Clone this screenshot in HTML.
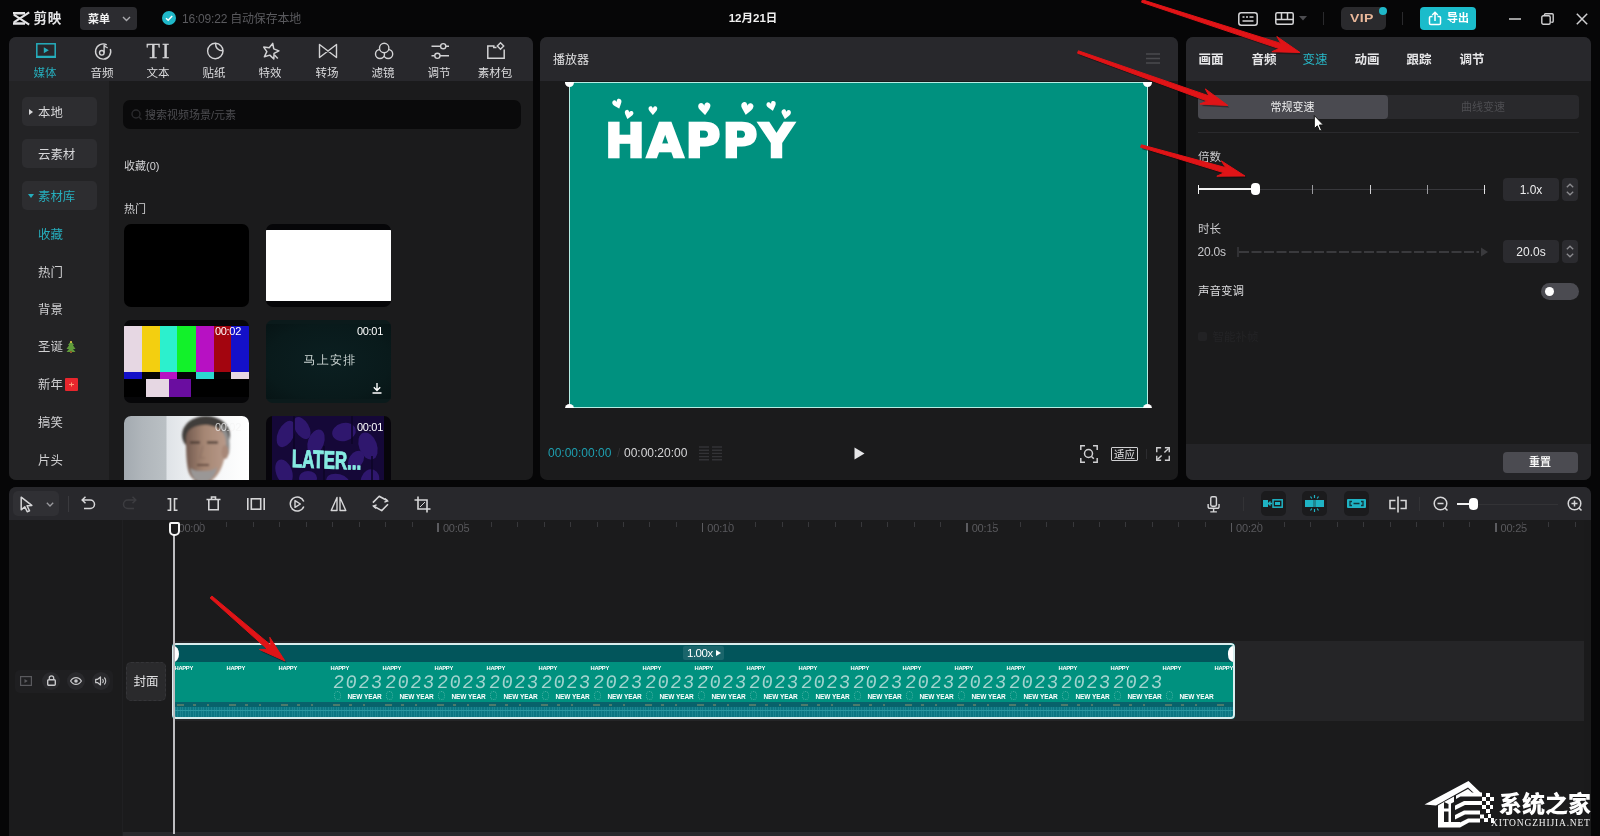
<!DOCTYPE html>
<html lang="zh-CN">
<head>
<meta charset="utf-8">
<title>剪映</title>
<style>
*{box-sizing:border-box;margin:0;padding:0}
html,body{width:1600px;height:836px;overflow:hidden;background:#060607;}
body{position:relative;font-family:"Liberation Sans","Noto Sans CJK SC",sans-serif;font-size:12px;color:#d8d8da;-webkit-font-smoothing:antialiased}
#root{position:absolute;left:0;top:0;width:1600px;height:836px;will-change:transform}
.abs{position:absolute}
svg{display:block;overflow:visible}
/* ---------- title bar ---------- */
#topbar{position:absolute;left:0;top:0;width:1600px;height:38px;background:#060607}
#logo{position:absolute;left:33.500px;top:8.500px;font-size:13.500px;font-weight:700;color:#e4e4e6;line-height:20px;letter-spacing:.800px}
#menu{position:absolute;left:80px;top:7px;width:57px;height:23px;border-radius:4px;background:#2c2c30;color:#f2f2f2;font-size:11px;font-weight:700;line-height:25px;padding-left:8px}
#saved{position:absolute;left:182px;top:10px;font-size:12px;color:#5a5a5e;line-height:18px;letter-spacing:-0.2px}
#title{position:absolute;left:653px;top:9px;width:200px;text-align:center;font-size:11.5px;font-weight:700;color:#f0f0f0;line-height:18px}
#vip{position:absolute;left:1341px;top:7px;width:45px;height:23px;border-radius:5px;background:#2a2a2d}
#export{position:absolute;left:1420px;top:7px;width:56px;height:23px;border-radius:4px;background:#1bbccb;color:#fff;font-size:11px;font-weight:700;line-height:23px;padding-left:27px}
.vsep{position:absolute;width:1px;background:#2a2a2d}
/* ---------- panels ---------- */
.panel{position:absolute;background:#1b1b1c;border-radius:7px;overflow:hidden}
.phead{position:absolute;left:0;top:0;right:0;background:#28282c}
/* left */
#left{left:9px;top:37px;width:524px;height:443px}
#left .phead{height:44px}
.tab{position:absolute;top:0;width:56px;height:44px;text-align:center;color:#dcdcde;font-size:11.5px;line-height:14px}
.ti{position:absolute;left:0;right:0;top:3px;font-family:"Liberation Serif",serif;font-size:22px;line-height:22px;color:#d2d2d4;letter-spacing:2px;padding-left:2px;-webkit-text-stroke:.350px #d2d2d4}
.tab span{position:absolute;left:-4px;right:-4px;top:29px}
.tab svg{position:absolute;left:17.500px;top:5px}
.tab.on{color:#26aebd}
#side{position:absolute;left:0;top:44px;width:100px;height:399px;background:#232325}
.sbtn{position:absolute;left:13px;width:75px;height:29px;border-radius:5px;background:#2d2d30;color:#d6d6d8;font-size:12.400px;line-height:32px;padding-left:16px}
.sitem{position:absolute;left:29px;font-size:12.400px;color:#d0d0d2;line-height:16px}
#search{position:absolute;left:114px;top:62.500px;width:398px;height:29px;border-radius:7px;background:#0a0a0b;color:#4c4c50;font-size:11px;line-height:30px;padding-left:22px}
.lbl{position:absolute;font-size:11px;color:#d2d2d4;line-height:14px}
.th{position:absolute;width:125px;height:83px;border-radius:7px;overflow:hidden;background:#060608}
.dur{position:absolute;right:8px;top:5px;font-size:11px;color:#fff;line-height:12px;letter-spacing:-0.3px}
/* player */
#player{left:540px;top:37px;width:638px;height:443px}
#player .phead{height:44px}
#ptitle{position:absolute;left:13px;top:15px;font-size:12px;color:#e2e2e4;line-height:16px}
#canvas{position:absolute;left:28.600px;top:45px;width:579.800px;height:326px;background:#00917f;border:1.600px solid #b4eee4}
.hd{position:absolute;width:9px;height:9px;border-radius:4.500px;background:#fff}
#happy{position:absolute;left:35px;top:35px;font-size:50px;font-weight:700;color:#fff;letter-spacing:2px;line-height:50px;font-family:"DejaVu Sans","Liberation Sans",sans-serif;transform-origin:0 0;transform:scale(.953,.920);-webkit-text-stroke:2.500px #fff}
.tc{position:absolute;top:408px;font-size:12px;line-height:16px;letter-spacing:0}
/* right */
#right{left:1185.500px;top:37px;width:405px;height:443px}
#right .phead{height:44px}
.rtab{position:absolute;top:14.500px;font-size:12.500px;font-weight:700;color:#e6e6e8;line-height:16px}
.rtab.on{color:#27b9c9;font-weight:400}
#seg{position:absolute;left:12px;top:58px;width:381px;height:24px;border-radius:4px;background:#29292c}
#seg .a{position:absolute;left:0;top:0;width:190px;height:24px;border-radius:4px;background:#4a4a50;color:#f0f0f0;text-align:center;font-size:11px;line-height:24px}
#seg .b{position:absolute;left:190px;top:0;width:191px;height:24px;color:#4e4e52;text-align:center;font-size:11px;line-height:24px}
.rl{position:absolute;left:12.500px;font-size:11.500px;color:#c9c9cc;line-height:14px}
.num{position:absolute;width:56px;height:23px;border-radius:4px;background:#2b2b2f;color:#ededee;font-size:12px;line-height:24.500px;text-align:center}
.spin{position:absolute;width:16px;height:23px;border-radius:4px;background:#2b2b2f}
#rfoot{position:absolute;left:0;top:407px;width:405px;height:36px;background:#242427}
#reset{position:absolute;left:317px;top:8px;width:75px;height:21px;border-radius:4px;background:#4b4b51;color:#f4f4f4;font-size:11px;font-weight:700;text-align:center;line-height:21px}
/* timeline */
#tl{left:9px;top:487px;width:1582px;height:360px}
#tl .phead{height:33px}
#ruler{position:absolute;left:0;top:33px;width:1582px;height:16px}
.rt{position:absolute;top:33px;font-size:11px;color:#5a5a5e;line-height:12px;letter-spacing:-0.200px}

.fh{position:absolute;top:21px;font-size:5.800px;line-height:8px;font-weight:700;color:#fff;letter-spacing:-0.300px}
.fy{position:absolute;top:30.500px;width:50px;font-size:19px;line-height:18px;color:#b4dcd8;letter-spacing:1.200px;font-family:"Liberation Mono",monospace;font-weight:400;transform:skewX(-6deg);opacity:.900}
.fn{position:absolute;top:49.500px;font-size:6.500px;line-height:8px;font-weight:700;color:#fff;letter-spacing:-0.100px;white-space:nowrap}
.fs{position:absolute;top:48px;width:7px;height:9px;border-radius:50%;border:1px dotted #9fd8cf;opacity:.450}
</style>
</head>
<body>
<div id="root">
<div id="topbar">
  <svg class="abs" style="left:13px;top:11px" width="17" height="15" viewBox="0 0 17 15"><path d="M0 2.300H12M0 12.600H12" fill="none" stroke="#e4e4e6" stroke-width="2.500"/><path d="M16.200 1.300L.800 11.300M16.200 13.600L.800 3.600" fill="none" stroke="#e4e4e6" stroke-width="2.100"/></svg>
  <div id="logo">剪映</div>
  <div id="menu">菜单<svg class="abs" style="left:42px;top:9px" width="9" height="6" viewBox="0 0 9 6"><path d="M1 1l3.5 3.5L8 1" fill="none" stroke="#a9a9ad" stroke-width="1.4"/></svg></div>
  <svg class="abs" style="left:162px;top:11px" width="14" height="14" viewBox="0 0 14 14"><circle cx="7" cy="7" r="7" fill="#1fb8c9"/><path d="M4 7.2l2.2 2.1L10.2 5" fill="none" stroke="#fff" stroke-width="1.5"/></svg>
  <div id="saved">16:09:22 自动保存本地</div>
  <div id="title">12月21日</div>
  <!-- keyboard -->
  <svg class="abs" style="left:1238px;top:12px" width="20" height="14" viewBox="0 0 20 14"><rect x=".8" y=".8" width="18.4" height="12.4" rx="2.5" fill="none" stroke="#d5d5d7" stroke-width="1.5"/><path d="M4.5 5h2M8 5h2M11.5 5h4M4.5 9h11" stroke="#d5d5d7" stroke-width="1.5"/></svg>
  <svg class="abs" style="left:1275px;top:12px" width="19" height="13" viewBox="0 0 19 13"><rect x=".8" y=".8" width="17.4" height="11.4" rx="1.5" fill="none" stroke="#d5d5d7" stroke-width="1.5"/><path d="M1 7.5h17M6.5 1v6.5M12.5 1v6.5" stroke="#d5d5d7" stroke-width="1.5"/></svg>
  <svg class="abs" style="left:1299px;top:16px" width="8" height="5" viewBox="0 0 8 5"><path d="M0 0h8L4 4.5z" fill="#4c4c50"/></svg>
  <div class="vsep" style="left:1323px;top:12px;height:13px"></div>
  <div id="vip"><div class="abs" style="left:9px;top:5px;font-size:11px;line-height:13px;font-weight:700;color:#eab89a;letter-spacing:.300px;transform-origin:0 50%;transform:scaleX(1.280)">VIP</div><div class="abs" style="left:38px;top:0;width:8px;height:8px;border-radius:4px;background:#1fb8c9"></div></div>
  <div class="vsep" style="left:1402px;top:12px;height:13px"></div>
  <div id="export"><svg class="abs" style="left:8px;top:4px" width="14" height="15" viewBox="0 0 14 15"><path d="M4.500 5.500H2.800a1.300 1.300 0 0 0-1.300 1.300v5.400a1.300 1.300 0 0 0 1.300 1.300h8.400a1.300 1.300 0 0 0 1.300-1.300V6.800a1.300 1.300 0 0 0-1.300-1.300H9.500M7 10V1.500M4.200 4L7 1.300 9.800 4" fill="none" stroke="#fff" stroke-width="1.500"/></svg>导出</div>
  <svg class="abs" style="left:1509px;top:18px" width="12" height="2" viewBox="0 0 12 2"><path d="M0 1h12" stroke="#cfcfd1" stroke-width="1.500"/></svg>
  <svg class="abs" style="left:1541px;top:13px" width="13" height="12" viewBox="0 0 13 12"><rect x=".8" y="2.800" width="8.400" height="8.400" rx="1.500" fill="none" stroke="#cfcfd1" stroke-width="1.400"/><path d="M3.500 2.500V1.800a1 1 0 0 1 1-1h6.700a1 1 0 0 1 1 1v6.400a1 1 0 0 1-1 1h-.9" fill="none" stroke="#cfcfd1" stroke-width="1.400"/></svg>
  <svg class="abs" style="left:1576px;top:13px" width="12" height="12" viewBox="0 0 12 12"><path d="M.800 .800l10.400 10.400M11.200 .800L.800 11.200" stroke="#cfcfd1" stroke-width="1.500"/></svg>
</div>

<!-- LEFT PANEL -->
<div class="panel" id="left">
  <div class="phead" id="ltabs">
    <div class="tab on" style="left:8px"><svg width="22" height="18" viewBox="0 0 22 18"><rect x="1.8" y="1.800" width="18.400" height="13.400" fill="none" stroke="#26aebd" stroke-width="1.500"/><path d="M1 14.800h20" stroke="#26aebd" stroke-width="2.200"/><path d="M8.800 5.300v6l5-3z" fill="#26aebd"/></svg><span>媒体</span></div>
    <div class="tab" style="left:65px"><svg width="22" height="18" viewBox="0 0 22 18"><path d="M14.800 2.900A7.600 7.600 0 1 0 18.300 7" fill="none" stroke="#d2d2d4" stroke-width="1.400"/><circle cx="9.800" cy="10.800" r="2.300" fill="none" stroke="#d2d2d4" stroke-width="1.400"/><path d="M12.100 10.800V2.600c.5 1.800 2 2.800 3.600 3.300" fill="none" stroke="#d2d2d4" stroke-width="1.400"/></svg><span>音频</span></div>
    <div class="tab" style="left:121px"><div class="ti">TI</div><span>文本</span></div>
    <div class="tab" style="left:177px"><svg width="22" height="18" viewBox="0 0 22 18"><path d="M11.500 1.300A7.700 7.700 0 1 0 19 8.800" fill="none" stroke="#d2d2d4" stroke-width="1.400"/><path d="M11.500 1.300c0 4.500 2.500 7.500 7.500 7.500C19 5 16 1.500 11.500 1.300z" fill="none" stroke="#d2d2d4" stroke-width="1.400" stroke-linejoin="round"/></svg><span>贴纸</span></div>
    <div class="tab" style="left:233px"><svg width="22" height="18" viewBox="0 0 22 18"><path d="M10.800 .800l2.200 4.800 5.200 .600-3.900 3.500 1.100 5.200-4.600-2.700-4.600 2.700 1.100-5.200-3.900-3.500 5.200-.600z" fill="none" stroke="#d2d2d4" stroke-width="1.400" stroke-linejoin="round" transform="rotate(14 10.800 8.500) translate(-.500 .300) scale(1.060)"/><path d="M14.500 13l3.300 3.600" stroke="#d2d2d4" stroke-width="1.500"/></svg><span>特效</span></div>
    <div class="tab" style="left:290px"><svg width="22" height="18" viewBox="0 0 22 18"><path d="M2.500 2.500v13l17-13v13z" fill="none" stroke="#d2d2d4" stroke-width="1.400" stroke-linejoin="round"/></svg><span>转场</span></div>
    <div class="tab" style="left:346px"><svg width="22" height="18" viewBox="0 0 22 18"><circle cx="15.200" cy="12" r="4.500" fill="#28282c" stroke="#d2d2d4" stroke-width="1.400"/><circle cx="7" cy="12" r="4.500" fill="#28282c" stroke="#d2d2d4" stroke-width="1.400"/><circle cx="11.200" cy="6" r="4.700" fill="#28282c" stroke="#d2d2d4" stroke-width="1.400"/></svg><span>滤镜</span></div>
    <div class="tab" style="left:402px"><svg width="22" height="18" viewBox="0 0 22 18"><path d="M2.500 4.200h9M17 4.200h3M2.500 13.800h3.200M11 13.800h9" stroke="#d2d2d4" stroke-width="1.400"/><circle cx="14.200" cy="4.200" r="2.600" fill="none" stroke="#d2d2d4" stroke-width="1.400"/><circle cx="8.400" cy="13.800" r="2.600" fill="none" stroke="#d2d2d4" stroke-width="1.400"/></svg><span>调节</span></div>
    <div class="tab" style="left:458px"><svg width="22" height="18" viewBox="0 0 22 18"><path d="M11.500 5.500H8.800V4H2.800v12.200h16.400V7.500" fill="none" stroke="#d2d2d4" stroke-width="1.500"/><path d="M15.500 .800l3.200 3.200-3.200 3.200-3.200-3.200z" fill="none" stroke="#d2d2d4" stroke-width="1.400"/></svg><span>素材包</span></div>
  </div>
  <div id="side">
    <div class="sbtn" style="top:16px"><svg class="abs" style="left:6.500px;top:12px" width="4" height="6" viewBox="0 0 4 6"><path d="M0 0l4 3L0 6z" fill="#d6d6d8"/></svg>本地</div>
    <div class="sbtn" style="top:58px">云素材</div>
    <div class="sbtn" style="top:100px;color:#26aebd"><svg class="abs" style="left:5.500px;top:13px" width="6" height="4" viewBox="0 0 6 4"><path d="M0 0h6L3 4z" fill="#26aebd"/></svg>素材库</div>
    <div class="sitem" style="top:145.8px;color:#26aebd">收藏</div>
    <div class="sitem" style="top:183.8px">热门</div>
    <div class="sitem" style="top:221.3px">背景</div>
    <div class="sitem" style="top:258.1px">圣诞<svg class="abs" style="left:28px;top:2px" width="10" height="12" viewBox="0 0 10 12"><path d="M5 0l3 4H6.800L9.500 8H7l2.500 3H.500L3 8H.500L3.200 4H2z" fill="#5f9a3a"/><rect x="4" y="10" width="2" height="2" fill="#8a5a2b"/><circle cx="5" cy="1" r="1" fill="#e8c84a"/></svg></div>
    <div class="sitem" style="top:295.6px">新年<div class="abs" style="left:27px;top:1px;width:13px;height:13px;background:#e8262d;border-radius:1px"><svg width="13" height="13" viewBox="0 0 13 13"><path d="M4 6.500h5M6.500 4.500v4" stroke="#ff9f7a" stroke-width="1"/></svg></div></div>
    <div class="sitem" style="top:333.8px">搞笑</div>
    <div class="sitem" style="top:371.6px">片头</div>
  </div>
  <div id="lcontent">
    <div id="search"><svg class="abs" style="left:8px;top:9px" width="11" height="11" viewBox="0 0 11 11"><circle cx="5" cy="5" r="4" fill="none" stroke="#2a2a2d" stroke-width="1.400"/><path d="M8 8l2.500 2.500" stroke="#2a2a2d" stroke-width="1.400"/></svg>搜索视频场景/元素</div>
    <div class="lbl" style="left:115px;top:122px">收藏(0)</div>
    <div class="lbl" style="left:115px;top:165px">热门</div>
    <div class="th" style="left:115px;top:187px;background:#000"></div>
    <div class="th" style="left:257px;top:187px"><div class="abs" style="left:0;top:6px;width:125px;height:71px;background:#fff"></div></div>
    <div class="th" id="bars" style="left:115px;top:283px">
      <div class="abs" style="left:0px;top:6px;width:18px;height:46px;background:#e6d7e3"></div>
      <div class="abs" style="left:18px;top:6px;width:18px;height:46px;background:#f3cf10"></div>
      <div class="abs" style="left:36px;top:6px;width:17px;height:46px;background:#2cf0cd"></div>
      <div class="abs" style="left:53px;top:6px;width:19px;height:46px;background:#12f12a"></div>
      <div class="abs" style="left:72px;top:6px;width:18px;height:46px;background:#b711c3"></div>
      <div class="abs" style="left:90px;top:6px;width:17px;height:46px;background:#a3050f"></div>
      <div class="abs" style="left:107px;top:6px;width:18px;height:46px;background:#1410c9"></div>
      <div class="abs" style="left:0px;top:52px;width:18px;height:6.500px;background:#1410c9"></div>
      <div class="abs" style="left:18px;top:52px;width:18px;height:6.500px;background:#050505"></div>
      <div class="abs" style="left:36px;top:52px;width:17px;height:6.500px;background:#b711c3"></div>
      <div class="abs" style="left:53px;top:52px;width:19px;height:6.500px;background:#050505"></div>
      <div class="abs" style="left:72px;top:52px;width:18px;height:6.500px;background:#2cd8d0"></div>
      <div class="abs" style="left:90px;top:52px;width:17px;height:6.500px;background:#050505"></div>
      <div class="abs" style="left:107px;top:52px;width:18px;height:6.500px;background:#e6d7e3"></div>
      <div class="abs" style="left:0;top:58.500px;width:125px;height:18.500px;background:#000"></div>
      <div class="abs" style="left:22px;top:58.500px;width:23px;height:18px;background:#e6d7e3"></div>
      <div class="abs" style="left:45px;top:58.500px;width:22px;height:18px;background:#6a0da0"></div>
      <div class="dur">00:02</div>
    </div>
    <div class="th" style="left:257px;top:283px;background:#0b1a1b">
      <div class="abs" style="left:0;top:4px;width:125px;height:75px;background:radial-gradient(ellipse at 50% 50%,#0b1f21 0%,#091a1b 70%,#071415 100%)"></div>
      <div class="abs" style="left:0;top:32.500px;width:125px;text-align:center;font-size:12px;line-height:14px;color:#cfd8d6;letter-spacing:1.300px;padding-left:3px;font-family:'WenQuanYi Zen Hei','Noto Sans CJK SC',sans-serif">马上安排</div>
      <svg class="abs" style="left:106px;top:63px" width="10" height="11" viewBox="0 0 10 11"><path d="M5 0v7M1.800 4.200L5 7.400l3.200-3.200M.500 10h9" fill="none" stroke="#fff" stroke-width="1.400"/></svg>
      <div class="dur">00:01</div>
    </div>
    <div class="th" id="man" style="left:115px;top:378.500px">
      <svg class="abs" style="left:0;top:0" width="125" height="83" viewBox="0 0 125 83">
        <defs>
          <linearGradient id="mbg" x1="0" x2="1" y1="0" y2="0"><stop offset="0" stop-color="#a3aab0"/><stop offset=".150" stop-color="#b0b6bb"/><stop offset=".335" stop-color="#bac0c4"/><stop offset=".345" stop-color="#dfe3e7"/><stop offset=".600" stop-color="#f1f3f5"/><stop offset="1" stop-color="#ffffff"/></linearGradient>
          <linearGradient id="mface" x1="0" x2="1" y1="0" y2="0"><stop offset="0" stop-color="#735a4f"/><stop offset=".450" stop-color="#a58673"/><stop offset="1" stop-color="#b89a8a"/></linearGradient>
          <filter id="mbl" x="-10%" y="-10%" width="120%" height="120%"><feGaussianBlur stdDeviation="1.200"/></filter>
        </defs>
        <rect width="125" height="83" fill="url(#mbg)"/>
        <g filter="url(#mbl)">
          <path d="M56 70c8-4 16-6 24-6 10 0 22 4 30 10v10H50z" fill="#2e2e30"/>
          <ellipse cx="82" cy="19" rx="24" ry="19" fill="#403d3b"/>
          <path d="M98 8c6 6 9 16 7 30l-6 4z" fill="#8e8e8e"/>
          <path d="M62 22c0-8 8-13 19-13s21 6 21 18c0 10-2 22-8 31-4 6-10 9-15 9s-11-3-14-10c-3-8-3-24-3-35z" fill="url(#mface)"/>
          <path d="M66 52c4 3 8 3 14 3s10-1 13-4c-1 8-6 15-14 15s-12-6-13-14z" fill="#9a9796"/>
          <ellipse cx="101" cy="36" rx="3.500" ry="7" fill="#a88878"/>
          <path d="M66 26.500h10M83 26.500h11" stroke="#3f302a" stroke-width="2.200"/>
          <path d="M73 49h12" stroke="#5e433c" stroke-width="1.800"/>
          <path d="M79 30l-3 12h5" stroke="#8f7265" stroke-width="1.200" fill="none"/>
        </g>
      </svg>
      <div class="dur" style="color:#f4f4f4;opacity:.800">00:02</div>
    </div>
    <div class="th" id="later" style="left:257px;top:378.500px;background:#07050b">
      <div class="abs" style="left:6px;top:0;width:112px;height:83px;background:#150838;overflow:hidden">
      <svg class="abs" style="left:0;top:0" width="112" height="83" viewBox="0 0 112 83"><g fill="#2f176e"><ellipse cx="14" cy="18" rx="8" ry="14" transform="rotate(25 14 18)"/><ellipse cx="30" cy="12" rx="7" ry="12" transform="rotate(-30 30 12)"/><ellipse cx="44" cy="26" rx="8" ry="13" transform="rotate(20 44 26)"/><ellipse cx="72" cy="16" rx="12" ry="9" transform="rotate(-15 72 16)"/><ellipse cx="96" cy="30" rx="9" ry="14" transform="rotate(-20 96 30)"/><ellipse cx="12" cy="56" rx="8" ry="13" transform="rotate(-20 12 56)"/><ellipse cx="36" cy="62" rx="9" ry="7"/><ellipse cx="66" cy="66" rx="12" ry="8" transform="rotate(15 66 66)"/><ellipse cx="98" cy="64" rx="9" ry="11" transform="rotate(20 98 64)"/><ellipse cx="84" cy="44" rx="7" ry="10" transform="rotate(35 84 44)"/></g><g stroke="#0d0526" stroke-width="1.500"><path d="M22 0v40M52 30v53M80 0v28M100 40v43"/></g></svg>
      </div>
      <div class="abs" style="left:26px;top:30px;font-size:25px;line-height:25px;font-weight:700;color:#86ebe2;-webkit-text-stroke:.900px #86ebe2;white-space:nowrap;transform-origin:0 0;transform:scale(.680,1) rotate(1.500deg)">LATER...</div>
      <div class="dur">00:01</div>
    </div>
  </div>
</div>

<!-- PLAYER -->
<div class="panel" id="player">
  <div class="phead"></div>
  <div id="ptitle">播放器</div>
  <svg class="abs" style="left:606px;top:16px" width="14" height="11" viewBox="0 0 14 11"><path d="M0 1h14M0 5.500h14M0 10h14" stroke="#4a4a4e" stroke-width="1.600"/></svg>
  <div id="canvas">
    <div class="abs" style="left:42.5px;top:15.5px;width:11px;height:11px;line-height:11px;font-size:13px;color:#fff;text-align:center;font-family:'DejaVu Sans',sans-serif;transform:rotate(-20deg)">♥</div><div class="abs" style="left:53.0px;top:27.0px;width:10px;height:10px;line-height:10px;font-size:12px;color:#fff;text-align:center;font-family:'DejaVu Sans',sans-serif;transform:rotate(15deg)">♥</div><div class="abs" style="left:78.0px;top:23.0px;width:10px;height:10px;line-height:10px;font-size:12px;color:#fff;text-align:center;font-family:'DejaVu Sans',sans-serif;transform:rotate(0deg)">♥</div><div class="abs" style="left:127.5px;top:18.5px;width:15px;height:15px;line-height:15px;font-size:17px;color:#fff;text-align:center;font-family:'DejaVu Sans',sans-serif;transform:rotate(-5deg)">♥</div><div class="abs" style="left:169.5px;top:18.5px;width:15px;height:15px;line-height:15px;font-size:17px;color:#fff;text-align:center;font-family:'DejaVu Sans',sans-serif;transform:rotate(10deg)">♥</div><div class="abs" style="left:196.5px;top:17.5px;width:11px;height:11px;line-height:11px;font-size:13px;color:#fff;text-align:center;font-family:'DejaVu Sans',sans-serif;transform:rotate(-15deg)">♥</div><div class="abs" style="left:210.0px;top:25.5px;width:11px;height:11px;line-height:11px;font-size:13px;color:#fff;text-align:center;font-family:'DejaVu Sans',sans-serif;transform:rotate(10deg)">♥</div>
    <div id="happy">HAPPY</div>
  </div>
  <div class="abs" style="left:20px;top:45px;width:600px;height:326px;overflow:hidden"><div class="hd" style="left:4.900px;top:-4.500px"></div><div class="hd" style="left:583.100px;top:-4.500px"></div><div class="hd" style="left:4.900px;top:321.500px"></div><div class="hd" style="left:583.100px;top:321.500px"></div></div>
  <div class="tc" style="left:8px;color:#1e9fb0">00:00:00:00</div>
  <div class="tc" style="left:77px;color:#333336">/</div>
  <div class="tc" style="left:84px;color:#d6d6d8">00:00:20:00</div>
  <svg class="abs" style="left:159px;top:409px" width="23" height="15" viewBox="0 0 23 15"><g stroke="#333336" stroke-width="1.400"><path d="M0 1h10M13 1h10M0 4.200h10M13 4.200h10M0 7.400h10M13 7.400h10M0 10.600h10M13 10.600h10M0 13.800h10M13 13.800h10"/></g></svg>
  <svg class="abs" style="left:314px;top:410px" width="11" height="13" viewBox="0 0 11 13"><path d="M.500 .500v12l10-6z" fill="#e6e6e8"/></svg>
  <svg class="abs" style="left:540px;top:408px" width="18" height="18" viewBox="0 0 18 18"><path d="M.800 5V.800H5M13 .800h4.200V5M17.200 13v4.200H13M5 17.200H.800V13" fill="none" stroke="#d0d0d2" stroke-width="1.500"/><circle cx="8.500" cy="8.500" r="4" fill="none" stroke="#d0d0d2" stroke-width="1.500"/><path d="M11.500 11.500l2.300 2.300" stroke="#d0d0d2" stroke-width="1.500"/></svg>
  <div class="abs" style="left:571px;top:410px;width:27px;height:14px;border:1px solid #d0d0d2;border-radius:1px;font-size:10.500px;line-height:12px;text-align:center;color:#e0e0e2;letter-spacing:0">适应</div>
  <div class="vsep" style="left:606px;top:412px;height:10px;background:#2c2c2f"></div>
  <svg class="abs" style="left:615.500px;top:410px" width="14" height="14" viewBox="0 0 15 15"><path d="M.800 5.500V.800H5.500M9.500 .800h4.700V5.500M14.200 9.500v4.700H9.500M5.500 14.200H.800V9.500" fill="none" stroke="#d0d0d2" stroke-width="1.500"/><path d="M13.500 1.500L9 6M1.500 13.500L6 9" stroke="#d0d0d2" stroke-width="1.500"/></svg>
</div>

<!-- RIGHT -->
<div class="panel" id="right">
  <div class="phead"></div>
  <div class="rtab" style="left:13px">画面</div>
  <div class="rtab" style="left:66px">音频</div>
  <div class="rtab on" style="left:117px">变速</div>
  <div class="rtab" style="left:169px">动画</div>
  <div class="rtab" style="left:221px">跟踪</div>
  <div class="rtab" style="left:274px">调节</div>
  <div id="seg"><div class="a">常规变速</div><div class="b">曲线变速</div></div>
  <div class="abs" style="left:12px;top:95px;width:381px;height:1px;background:#2a2a2d"></div>
  <div class="rl" style="top:113px">倍数</div>
  <!-- slider -->
  <div class="abs" style="left:12px;top:152px;width:288px;height:1px;background:#38383c"></div>
  <div class="abs" style="left:12px;top:151px;width:58px;height:2px;background:#f2f2f2"></div>
  <div class="abs" style="left:12px;top:148px;width:1px;height:9px;background:#f2f2f2"></div>
  <div class="abs" style="left:126px;top:148px;width:1px;height:9px;background:#9a9a9e"></div>
  <div class="abs" style="left:184px;top:148px;width:1px;height:9px;background:#d0d0d2"></div>
  <div class="abs" style="left:241px;top:148px;width:1px;height:9px;background:#9a9a9e"></div>
  <div class="abs" style="left:298px;top:148px;width:1px;height:9px;background:#e0e0e2"></div>
  <div class="abs" style="left:65px;top:146px;width:9px;height:12px;border-radius:4px;background:#fff"></div>
  <div class="num" style="left:317.500px;top:141px">1.0x</div>
  <div class="spin" style="left:376px;top:141px"><svg class="abs" style="left:4px;top:5px" width="8" height="13" viewBox="0 0 8 13"><path d="M.800 4.300L4 1.200l3.200 3.100M.800 8.700L4 11.800l3.200-3.100" fill="none" stroke="#8a8a8e" stroke-width="1.300"/></svg></div>
  <div class="rl" style="top:185px">时长</div>
  <div class="abs" style="left:12px;top:207px;font-size:12px;line-height:16px;color:#c9c9cc;letter-spacing:-0.200px">20.0s</div>
  <svg class="abs" style="left:51px;top:209px" width="252" height="12" viewBox="0 0 252 12"><path d="M1 1v10" stroke="#3a3a3d" stroke-width="1.500"/><path d="M2 6h240" stroke="#3a3a3d" stroke-width="2" stroke-dasharray="10 2.500"/><path d="M244 1.500l7 4.500-7 4.500z" fill="#3a3a3d"/></svg>
  <div class="num" style="left:317.500px;top:203px">20.0s</div>
  <div class="spin" style="left:376px;top:203px"><svg class="abs" style="left:4px;top:5px" width="8" height="13" viewBox="0 0 8 13"><path d="M.800 4.300L4 1.200l3.200 3.100M.800 8.700L4 11.800l3.200-3.100" fill="none" stroke="#8a8a8e" stroke-width="1.300"/></svg></div>
  <div class="rl" style="top:247px;color:#dcdcde">声音变调</div>
  <div class="abs" style="left:355px;top:246px;width:38px;height:17px;border-radius:9px;background:#4b4b51"><div class="abs" style="left:4px;top:4px;width:9px;height:9px;border-radius:5px;background:#fff"></div></div>
  <div class="abs" style="left:12px;top:295px;width:9px;height:9px;border-radius:2px;background:#222224"></div>
  <div class="rl" style="left:27px;top:293px;color:#242426">智能补帧</div>
  <div id="rfoot"><div id="reset">重置</div></div>
</div>

<!-- TIMELINE -->
<div class="panel" id="tl">
  <div class="phead"></div>
  <div class="abs" style="left:4px;top:4px;width:46px;height:25px;border-radius:5px;background:#303034"></div>
  <svg class="abs" style="left:11px;top:9px" width="14" height="17" viewBox="0 0 14 17"><path d="M1.200 1.200v12.600l3.600-3 2.400 5 2.300-1-2.400-5 4.700-.400z" fill="none" stroke="#d6d6d8" stroke-width="1.500" stroke-linejoin="round"/></svg>
  <svg class="abs" style="left:37px;top:15px" width="8" height="5" viewBox="0 0 8 5"><path d="M.800 .800L4 4l3.200-3.200" fill="none" stroke="#9a9a9e" stroke-width="1.300"/></svg>
  <div class="vsep" style="left:59px;top:9px;height:16px;background:#3a3a3e"></div>
  <svg class="abs" style="left:72px;top:9px" width="15" height="15" viewBox="0 0 15 15"><path d="M4.500 .800L1.200 4l3.300 3.200M1.500 4h7.700a4.300 4.300 0 0 1 0 8.600H3" fill="none" stroke="#d6d6d8" stroke-width="1.500"/></svg>
  <svg class="abs" style="left:113px;top:9px" width="15" height="15" viewBox="0 0 15 15"><path d="M10.500 .800L13.800 4l-3.300 3.200M13.500 4H5.800a4.300 4.300 0 0 0 0 8.600H12" fill="none" stroke="#3c3c40" stroke-width="1.500"/></svg>
  <svg class="abs" style="left:157.5px;top:10.5px" width="11" height="13" viewBox="0 0 11 13"><path d="M.500 .800h3v11.400h-3M10.500 .800h-3v11.400h3" fill="none" stroke="#d6d6d8" stroke-width="1.600"/></svg>
  <svg class="abs" style="left:197px;top:9px" width="15" height="15" viewBox="0 0 15 15"><path d="M.500 3.500h14M5.500 3.200V1h4v2.200M2.800 3.800v10h9.400v-10" fill="none" stroke="#d6d6d8" stroke-width="1.600"/></svg>
  <svg class="abs" style="left:237.500px;top:11px" width="18" height="12" viewBox="0 0 18 12"><path d="M.800 0v12M17.200 0v12" stroke="#d6d6d8" stroke-width="1.600"/><rect x="4.300" y=".800" width="9.400" height="10.400" fill="none" stroke="#d6d6d8" stroke-width="1.600"/></svg>
  <svg class="abs" style="left:280px;top:9px" width="16" height="16" viewBox="0 0 16 16"><path d="M14.800 5.500A7 7 0 1 0 14.800 10.500" fill="none" stroke="#d6d6d8" stroke-width="1.500"/><path d="M6 4.600v6.800l5.400-3.400z" fill="none" stroke="#d6d6d8" stroke-width="1.400" stroke-linejoin="round"/></svg>
  <svg class="abs" style="left:321px;top:9px" width="17" height="16" viewBox="0 0 17 16"><path d="M7 1.500v13H1.200z" fill="none" stroke="#d6d6d8" stroke-width="1.400" stroke-linejoin="round"/><path d="M10 1.500v13h5.800z" fill="none" stroke="#d6d6d8" stroke-width="1.400" stroke-linejoin="round"/></svg>
  <svg class="abs" style="left:363px;top:8px" width="17" height="17" viewBox="0 0 17 17"><path d="M.900 7.600L7.200 1.200l8.300 4.600M16 9.200l-6.300 6.400-8.300-4.600" fill="none" stroke="#d6d6d8" stroke-width="1.600" stroke-linejoin="round"/><path d="M13 3.500l2.700 2.400-3.300 1.200M4 13.500l-2.700-2.400 3.300-1.200" fill="none" stroke="#d6d6d8" stroke-width="1.300"/></svg>
  <svg class="abs" style="left:405px;top:9px" width="17" height="17" viewBox="0 0 17 17"><path d="M4 .500v12.500h12.500M.500 4h12.500v12.500" fill="none" stroke="#d6d6d8" stroke-width="1.600"/><path d="M6 11l5-5" stroke="#d6d6d8" stroke-width="1"/></svg>
  <svg class="abs" style="left:1198px;top:8.500px" width="13.200" height="17" viewBox="0 0 14 18"><rect x="4" y=".800" width="6" height="10" rx="1.500" fill="none" stroke="#d6d6d8" stroke-width="1.500"/><path d="M1.200 8.500v2.500a2 2 0 0 0 2 2h7.600a2 2 0 0 0 2-2V8.500M7 13v3.500M3.500 16.800h7" fill="none" stroke="#d6d6d8" stroke-width="1.500"/></svg>
  <div class="vsep" style="left:1234px;top:10px;height:14px;background:#333336"></div>
  <div class="abs" style="left:1251.5px;top:4px;width:25px;height:25px;border-radius:5px;background:#1b1b1d"></div>
  <div class="abs" style="left:1293px;top:4px;width:25px;height:25px;border-radius:5px;background:#1b1b1d"></div>
  <div class="abs" style="left:1335px;top:4px;width:25px;height:25px;border-radius:5px;background:#1b1b1d"></div>
  <svg class="abs" style="left:1254px;top:12px" width="20" height="9" viewBox="0 0 20 9"><rect x="0" y="1" width="5" height="7" fill="#1fb3c4"/><path d="M5 4.500h4M7.500 2.500l-2 2 2 2" stroke="#1fb3c4" stroke-width="1.300" fill="none"/><rect x="10" y=".800" width="9.200" height="7.400" fill="none" stroke="#1fb3c4" stroke-width="1.500"/><rect x="12" y="3" width="5" height="3" fill="#1fb3c4"/></svg>
  <svg class="abs" style="left:1296px;top:7px" width="19" height="19" viewBox="0 0 19 19"><rect x="0" y="6" width="8" height="7" fill="#1fb3c4"/><rect x="11" y="6" width="8" height="7" fill="#1fb3c4"/><rect x="8" y="6" width="3" height="7" fill="#1fb3c4" opacity=".700"/><path d="M9.500 1v3M5.500 2.500l1.300 2M13.500 2.500l-1.300 2M9.500 15v3M5.500 16.500l1.300-2M13.500 16.500l-1.300-2" stroke="#1fb3c4" stroke-width="1.200"/></svg>
  <svg class="abs" style="left:1338px;top:12px" width="19" height="9" viewBox="0 0 19 9"><rect x="0" y="0" width="19" height="9" rx="1" fill="#1fb3c4"/><path d="M5 2.500H3v4h2M14 2.500h2v4h-2M6.500 4.500h6" stroke="#12343a" stroke-width="1.300" fill="none"/></svg>
  <svg class="abs" style="left:1380px;top:9px" width="18" height="17" viewBox="0 0 18 17"><path d="M9 .500v16M6.500 4.500H1v8h5.500M11.500 4.500H17v8h-5.500" fill="none" stroke="#d6d6d8" stroke-width="1.600"/></svg>
  <div class="vsep" style="left:1410px;top:10px;height:14px;background:#333336"></div>
  <svg class="abs" style="left:1424px;top:9px" width="16" height="16" viewBox="0 0 16 16"><circle cx="7.500" cy="7.500" r="6.300" fill="none" stroke="#d6d6d8" stroke-width="1.500"/><path d="M4.500 7.500h6M12 12l2.500 2.500" stroke="#d6d6d8" stroke-width="1.500"/></svg>
  <div class="abs" style="left:1448px;top:17px;width:101px;height:1px;background:#333336"></div>
  <div class="abs" style="left:1448px;top:16px;width:14px;height:2px;background:#f0f0f0"></div>
  <div class="abs" style="left:1460px;top:11px;width:9px;height:12px;border-radius:4px;background:#fff"></div>
  <svg class="abs" style="left:1558px;top:9px" width="16" height="16" viewBox="0 0 16 16"><circle cx="7.500" cy="7.500" r="6.300" fill="none" stroke="#d6d6d8" stroke-width="1.500"/><path d="M4.500 7.500h6M7.500 4.500v6M12 12l2.500 2.500" stroke="#d6d6d8" stroke-width="1.500"/></svg>
  <div class="abs" style="left:113px;top:33px;width:1px;height:320px;background:#202022"></div>
  <div class="rt" style="left:169.5px;top:34.5px">00:00</div>
  <div class="abs" style="left:190.9px;top:35px;width:1px;height:5px;background:#38383b"></div>
  <div class="abs" style="left:217.4px;top:35px;width:1px;height:5px;background:#38383b"></div>
  <div class="abs" style="left:243.8px;top:35px;width:1px;height:5px;background:#38383b"></div>
  <div class="abs" style="left:270.3px;top:35px;width:1px;height:5px;background:#38383b"></div>
  <div class="abs" style="left:296.7px;top:35px;width:1px;height:5px;background:#38383b"></div>
  <div class="abs" style="left:323.1px;top:35px;width:1px;height:5px;background:#38383b"></div>
  <div class="abs" style="left:349.6px;top:35px;width:1px;height:5px;background:#38383b"></div>
  <div class="abs" style="left:376.0px;top:35px;width:1px;height:5px;background:#38383b"></div>
  <div class="abs" style="left:402.5px;top:35px;width:1px;height:5px;background:#38383b"></div>
  <div class="abs" style="left:428.4px;top:36px;width:1.500px;height:9px;background:#5c5c60"></div>
  <div class="rt" style="left:433.9px;top:34.5px">00:05</div>
  <div class="abs" style="left:455.3px;top:35px;width:1px;height:5px;background:#38383b"></div>
  <div class="abs" style="left:481.8px;top:35px;width:1px;height:5px;background:#38383b"></div>
  <div class="abs" style="left:508.2px;top:35px;width:1px;height:5px;background:#38383b"></div>
  <div class="abs" style="left:534.7px;top:35px;width:1px;height:5px;background:#38383b"></div>
  <div class="abs" style="left:561.1px;top:35px;width:1px;height:5px;background:#38383b"></div>
  <div class="abs" style="left:587.5px;top:35px;width:1px;height:5px;background:#38383b"></div>
  <div class="abs" style="left:614.0px;top:35px;width:1px;height:5px;background:#38383b"></div>
  <div class="abs" style="left:640.4px;top:35px;width:1px;height:5px;background:#38383b"></div>
  <div class="abs" style="left:666.9px;top:35px;width:1px;height:5px;background:#38383b"></div>
  <div class="abs" style="left:692.8px;top:36px;width:1.500px;height:9px;background:#5c5c60"></div>
  <div class="rt" style="left:698.3px;top:34.5px">00:10</div>
  <div class="abs" style="left:719.7px;top:35px;width:1px;height:5px;background:#38383b"></div>
  <div class="abs" style="left:746.2px;top:35px;width:1px;height:5px;background:#38383b"></div>
  <div class="abs" style="left:772.6px;top:35px;width:1px;height:5px;background:#38383b"></div>
  <div class="abs" style="left:799.1px;top:35px;width:1px;height:5px;background:#38383b"></div>
  <div class="abs" style="left:825.5px;top:35px;width:1px;height:5px;background:#38383b"></div>
  <div class="abs" style="left:851.9px;top:35px;width:1px;height:5px;background:#38383b"></div>
  <div class="abs" style="left:878.4px;top:35px;width:1px;height:5px;background:#38383b"></div>
  <div class="abs" style="left:904.8px;top:35px;width:1px;height:5px;background:#38383b"></div>
  <div class="abs" style="left:931.3px;top:35px;width:1px;height:5px;background:#38383b"></div>
  <div class="abs" style="left:957.2px;top:36px;width:1.500px;height:9px;background:#5c5c60"></div>
  <div class="rt" style="left:962.7px;top:34.5px">00:15</div>
  <div class="abs" style="left:984.1px;top:35px;width:1px;height:5px;background:#38383b"></div>
  <div class="abs" style="left:1010.6px;top:35px;width:1px;height:5px;background:#38383b"></div>
  <div class="abs" style="left:1037.0px;top:35px;width:1px;height:5px;background:#38383b"></div>
  <div class="abs" style="left:1063.5px;top:35px;width:1px;height:5px;background:#38383b"></div>
  <div class="abs" style="left:1089.9px;top:35px;width:1px;height:5px;background:#38383b"></div>
  <div class="abs" style="left:1116.3px;top:35px;width:1px;height:5px;background:#38383b"></div>
  <div class="abs" style="left:1142.8px;top:35px;width:1px;height:5px;background:#38383b"></div>
  <div class="abs" style="left:1169.2px;top:35px;width:1px;height:5px;background:#38383b"></div>
  <div class="abs" style="left:1195.7px;top:35px;width:1px;height:5px;background:#38383b"></div>
  <div class="abs" style="left:1221.6px;top:36px;width:1.500px;height:9px;background:#5c5c60"></div>
  <div class="rt" style="left:1227.1px;top:34.5px">00:20</div>
  <div class="abs" style="left:1248.5px;top:35px;width:1px;height:5px;background:#38383b"></div>
  <div class="abs" style="left:1275.0px;top:35px;width:1px;height:5px;background:#38383b"></div>
  <div class="abs" style="left:1301.4px;top:35px;width:1px;height:5px;background:#38383b"></div>
  <div class="abs" style="left:1327.9px;top:35px;width:1px;height:5px;background:#38383b"></div>
  <div class="abs" style="left:1354.3px;top:35px;width:1px;height:5px;background:#38383b"></div>
  <div class="abs" style="left:1380.7px;top:35px;width:1px;height:5px;background:#38383b"></div>
  <div class="abs" style="left:1407.2px;top:35px;width:1px;height:5px;background:#38383b"></div>
  <div class="abs" style="left:1433.6px;top:35px;width:1px;height:5px;background:#38383b"></div>
  <div class="abs" style="left:1460.1px;top:35px;width:1px;height:5px;background:#38383b"></div>
  <div class="abs" style="left:1486.0px;top:36px;width:1.500px;height:9px;background:#5c5c60"></div>
  <div class="rt" style="left:1491.5px;top:34.5px">00:25</div>
  <div class="abs" style="left:1512.9px;top:35px;width:1px;height:5px;background:#38383b"></div>
  <div class="abs" style="left:1539.4px;top:35px;width:1px;height:5px;background:#38383b"></div>
  <div class="abs" style="left:1565.8px;top:35px;width:1px;height:5px;background:#38383b"></div>
  <div class="abs" style="left:164px;top:154px;width:1411px;height:79.500px;background:#252527"></div>
  <div class="abs" style="left:1575px;top:33px;width:8px;height:320px;background:#1a1a1b"></div>
  <div class="abs" style="left:114px;top:344.5px;width:1377px;height:8px;background:#29292c"></div>
  <div class="abs" style="left:5.5px;top:182.5px;width:98px;height:23px;border-radius:5px;background:#1f1f21"></div>
  <svg class="abs" style="left:11px;top:189px" width="12" height="10" viewBox="0 0 12 10"><rect x=".600" y=".600" width="10.800" height="8.800" fill="none" stroke="#5a5a5e" stroke-width="1.200"/><path d="M4.500 3v4l3.200-2z" fill="#5a5a5e"/></svg>
  <div class="abs" style="left:33px;top:185px;width:18px;height:18px;border-radius:9px;background:#29292c"></div>
  <div class="abs" style="left:58px;top:185px;width:18px;height:18px;border-radius:9px;background:#29292c"></div>
  <div class="abs" style="left:83px;top:185px;width:18px;height:18px;border-radius:9px;background:#29292c"></div>
  <svg class="abs" style="left:37.5px;top:188px" width="9" height="11" viewBox="0 0 9 11"><rect x=".700" y="4.700" width="7.600" height="5.600" rx="1" fill="none" stroke="#c8c8ca" stroke-width="1.400"/><path d="M2.300 4.500V3a2.200 2.200 0 0 1 4.400 0v1.500" fill="none" stroke="#c8c8ca" stroke-width="1.300"/></svg>
  <svg class="abs" style="left:61px;top:190px" width="12" height="8" viewBox="0 0 12 8"><path d="M.600 4C2 1.500 4 .600 6 .600S10 1.500 11.400 4C10 6.500 8 7.400 6 7.400S2 6.500 .600 4z" fill="none" stroke="#c8c8ca" stroke-width="1.200"/><circle cx="6" cy="4" r="1.800" fill="#c8c8ca"/></svg>
  <svg class="abs" style="left:86px;top:189px" width="12" height="10" viewBox="0 0 12 10"><path d="M.700 3.300h2L5.500 1v8L2.700 6.700h-2z" fill="none" stroke="#c8c8ca" stroke-width="1.200" stroke-linejoin="round"/><path d="M7.500 3a3 3 0 0 1 0 4M9.300 1.500a5 5 0 0 1 0 7" fill="none" stroke="#c8c8ca" stroke-width="1.100"/></svg>
  <div class="abs" style="left:117px;top:174.5px;width:40px;height:39px;border-radius:5px;background:#2a2a2c;border:1px dashed #353538;color:#e0e0e2;font-size:12.500px;line-height:38px;text-align:center">封面</div>
  <div id="clip" class="abs" style="left:162.5px;top:156px;width:1063px;height:76px;border-radius:4px;background:#00917f;overflow:hidden">
<div class="abs" style="left:0;top:0;width:100%;height:18.500px;background:#02555b"></div>
<div class="abs" style="left:0;top:59px;width:100%;height:17px;background:#0c7682"></div>
<div class="abs" style="left:0;top:59px;width:100%;height:4.500px;background:#08626b"></div>
<div class="abs" style="left:0;top:63.500px;width:100%;height:12px;background:repeating-linear-gradient(90deg,rgba(60,160,170,.350) 0,rgba(60,160,170,.350) 1px,transparent 1px,transparent 2.600px)"></div><div class="abs" style="left:0;top:60.500px;width:100%;height:2px;opacity:.350;background:repeating-linear-gradient(90deg,transparent 0,transparent 5px,#c9a86a 5px,#c9a86a 12px,transparent 12px,transparent 21px,#c9a86a 21px,#c9a86a 24px,transparent 24px,transparent 35px,#c9a86a 35px,#c9a86a 37px,transparent 37px,transparent 52px)"></div><div class="abs" style="left:0;top:67px;width:100%;height:1px;background:#2a97a0"></div>
<div class="fh" style="left:3px">HAPPY</div>
<div class="fh" style="left:55px">HAPPY</div>
<div class="fh" style="left:107px">HAPPY</div>
<div class="fh" style="left:159px">HAPPY</div>
<div class="fy" style="left:161px">2023</div>
<div class="fn" style="left:176px">NEW YEAR</div>
<div class="fs" style="left:162px"></div>
<div class="fh" style="left:211px">HAPPY</div>
<div class="fy" style="left:213px">2023</div>
<div class="fn" style="left:228px">NEW YEAR</div>
<div class="fs" style="left:214px"></div>
<div class="fh" style="left:263px">HAPPY</div>
<div class="fy" style="left:265px">2023</div>
<div class="fn" style="left:280px">NEW YEAR</div>
<div class="fs" style="left:266px"></div>
<div class="fh" style="left:315px">HAPPY</div>
<div class="fy" style="left:317px">2023</div>
<div class="fn" style="left:332px">NEW YEAR</div>
<div class="fs" style="left:318px"></div>
<div class="fh" style="left:367px">HAPPY</div>
<div class="fy" style="left:369px">2023</div>
<div class="fn" style="left:384px">NEW YEAR</div>
<div class="fs" style="left:370px"></div>
<div class="fh" style="left:419px">HAPPY</div>
<div class="fy" style="left:421px">2023</div>
<div class="fn" style="left:436px">NEW YEAR</div>
<div class="fs" style="left:422px"></div>
<div class="fh" style="left:471px">HAPPY</div>
<div class="fy" style="left:473px">2023</div>
<div class="fn" style="left:488px">NEW YEAR</div>
<div class="fs" style="left:474px"></div>
<div class="fh" style="left:523px">HAPPY</div>
<div class="fy" style="left:525px">2023</div>
<div class="fn" style="left:540px">NEW YEAR</div>
<div class="fs" style="left:526px"></div>
<div class="fh" style="left:575px">HAPPY</div>
<div class="fy" style="left:577px">2023</div>
<div class="fn" style="left:592px">NEW YEAR</div>
<div class="fs" style="left:578px"></div>
<div class="fh" style="left:627px">HAPPY</div>
<div class="fy" style="left:629px">2023</div>
<div class="fn" style="left:644px">NEW YEAR</div>
<div class="fs" style="left:630px"></div>
<div class="fh" style="left:679px">HAPPY</div>
<div class="fy" style="left:681px">2023</div>
<div class="fn" style="left:696px">NEW YEAR</div>
<div class="fs" style="left:682px"></div>
<div class="fh" style="left:731px">HAPPY</div>
<div class="fy" style="left:733px">2023</div>
<div class="fn" style="left:748px">NEW YEAR</div>
<div class="fs" style="left:734px"></div>
<div class="fh" style="left:783px">HAPPY</div>
<div class="fy" style="left:785px">2023</div>
<div class="fn" style="left:800px">NEW YEAR</div>
<div class="fs" style="left:786px"></div>
<div class="fh" style="left:835px">HAPPY</div>
<div class="fy" style="left:837px">2023</div>
<div class="fn" style="left:852px">NEW YEAR</div>
<div class="fs" style="left:838px"></div>
<div class="fh" style="left:887px">HAPPY</div>
<div class="fy" style="left:889px">2023</div>
<div class="fn" style="left:904px">NEW YEAR</div>
<div class="fs" style="left:890px"></div>
<div class="fh" style="left:939px">HAPPY</div>
<div class="fy" style="left:941px">2023</div>
<div class="fn" style="left:956px">NEW YEAR</div>
<div class="fs" style="left:942px"></div>
<div class="fh" style="left:991px">HAPPY</div>
<div class="fn" style="left:1008px">NEW YEAR</div>
<div class="fs" style="left:994px"></div>
<div class="fh" style="left:1043px">HAPPY</div>
<div class="abs" style="left:511.500px;top:2.500px;width:41px;height:14px;border-radius:2px;background:#1a656b;color:#fff;font-size:11.500px;line-height:14px;padding-left:4px;letter-spacing:-0.500px">1.00x<svg class="abs" style="left:33px;top:4px" width="5" height="6" viewBox="0 0 5 6"><path d="M0 0l5 3-5 3z" fill="#fff"/></svg></div>
<div class="abs" style="left:1.500px;top:2.500px;width:5.500px;height:16px;border-radius:0 5.500px 5.500px 0/0 8px 8px 0;background:#fff"></div>
<div class="abs" style="left:1056px;top:2.500px;width:5.500px;height:16px;border-radius:5.500px 0 0 5.500px/8px 0 0 8px;background:#fff"></div>
<div class="abs" style="left:0;top:0;width:100%;height:100%;border:2px solid #d9eeee;border-radius:4px"></div>
</div>
  <div class="abs" style="left:164.2px;top:47px;width:1.600px;height:300px;background:#bdbdc0"></div>
  <div class="abs" style="left:159.5px;top:34.5px;width:11px;height:14.500px;border:2px solid #f4f4f4;border-radius:2px 2px 5px 5px;background:#1b1b1c"></div>
</div>

<!-- annotations -->
<svg class="abs" style="left:0;top:0;pointer-events:none" width="1600" height="836" viewBox="0 0 1600 836"><polygon points="1141.6,2.2 1279.2,48.6 1271.9,51.7 1300.0,52.5 1276.8,36.5 1280.9,43.4 1142.4,-0.2" fill="#1a0606" opacity=".450" transform="translate(1.500 2)"/><polygon points="1077.6,53.2 1207.3,101.0 1199.9,104.0 1228.0,105.5 1205.3,88.9 1209.1,95.9 1078.4,50.8" fill="#1a0606" opacity=".450" transform="translate(1.500 2)"/><polygon points="1140.6,147.2 1224.1,172.8 1216.8,176.2 1245.0,176.0 1221.3,160.8 1225.6,167.6 1141.4,144.8" fill="#1a0606" opacity=".450" transform="translate(1.500 2)"/><polygon points="210.1,598.0 267.4,649.3 259.3,649.4 285.0,661.0 269.8,637.3 270.9,645.2 211.9,596.0" fill="#1a0606" opacity=".450" transform="translate(1.500 2)"/><polygon points="1141.6,2.2 1279.2,48.6 1271.9,51.7 1300.0,52.5 1276.8,36.5 1280.9,43.4 1142.4,-0.2" fill="#e01417" stroke="#e01417" stroke-width="1" stroke-linejoin="round"/><polygon points="1077.6,53.2 1207.3,101.0 1199.9,104.0 1228.0,105.5 1205.3,88.9 1209.1,95.9 1078.4,50.8" fill="#e01417" stroke="#e01417" stroke-width="1" stroke-linejoin="round"/><polygon points="1140.6,147.2 1224.1,172.8 1216.8,176.2 1245.0,176.0 1221.3,160.8 1225.6,167.6 1141.4,144.8" fill="#e01417" stroke="#e01417" stroke-width="1" stroke-linejoin="round"/><polygon points="210.1,598.0 267.4,649.3 259.3,649.4 285.0,661.0 269.8,637.3 270.9,645.2 211.9,596.0" fill="#e01417" stroke="#e01417" stroke-width="1" stroke-linejoin="round"/>
<path d="M1314.300 115.500v13.200l3-2.900 2.300 5.300 2-.900-2.300-5.200h4.200z" fill="#fff" stroke="#111" stroke-width="1" stroke-linejoin="round"/>
</svg>
<!-- watermark -->
<svg class="abs" style="left:1424px;top:781px" width="72" height="47" viewBox="0 0 72 47">
  <g fill="#fff">
    <polygon points="0.500,23.500 44.500,0 58,13 51,13 44,6.500 12,24.500"/>
    <path d="M14 24.500L20 21v20h16v5.500H14z"/>
    <path d="M20 21l10-5.500v5.500l-3 1.600V41h-2.500V30.500H20v-3h4.500V23z"/>
    <path d="M32 14.500l12-6.500 4 3.500H58v4H36.500L32 18z"/>
    <path d="M31 24.500l9-4.500h18v4H41l-10 5z"/>
    <path d="M31 34l9-4.500h16v4H41l-10 5z"/>
    <path d="M36 41.500l8-4h12v4H45l-9 5z"/>
    <rect x="58" y="16" width="4" height="4"/><rect x="62" y="12" width="4" height="4"/><rect x="66" y="16" width="4" height="4"/>
    <rect x="58" y="24" width="4" height="4"/><rect x="62" y="20" width="4" height="4"/><rect x="62" y="28" width="4" height="4"/><rect x="66" y="24" width="3" height="4"/>
    <rect x="56" y="33.500" width="4" height="4"/><rect x="60" y="37" width="4" height="4"/><rect x="64" y="33" width="3" height="4"/><rect x="67" y="37" width="3" height="5"/>
  </g>
</svg>
<div class="abs" style="left:1499px;top:786.500px;font-size:23px;line-height:30px;font-weight:900;color:#fff;letter-spacing:0;white-space:nowrap;font-family:'Noto Sans CJK SC','Liberation Sans',sans-serif">系统之家</div>
<div class="abs" style="left:1491px;top:817px;font-size:9.500px;line-height:12px;color:#f2f2f2;white-space:nowrap;font-family:'Liberation Serif',serif;letter-spacing:.820px">XITONGZHIJIA.NET</div>
</div>
</body>
</html>
